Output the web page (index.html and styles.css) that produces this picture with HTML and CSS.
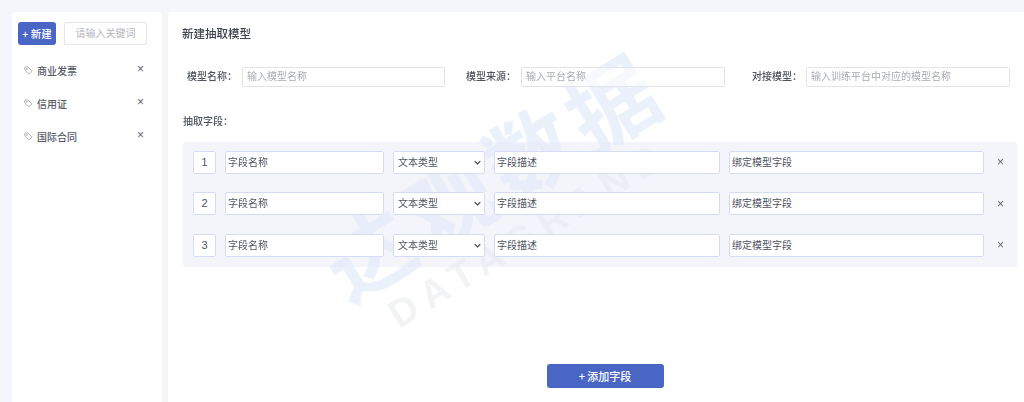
FILE: index.html
```html
<!DOCTYPE html>
<html lang="zh-CN">
<head>
<meta charset="utf-8">
<title>新建抽取模型</title>
<link rel="stylesheet" href="styles.css">
</head>
<body>
<div class="app">
  <aside class="sidebar">
    <div class="side-top">
      <button class="btn btn-new">+ 新建</button>
      <div class="search">请输入关键词</div>
    </div>
    <ul class="model-list">
      <li class="model-item">
        <svg class="tag" viewBox="0 0 12 12"><path d="M1 2v3.4l5.6 5.2 4-4.2L5 1.2H1.800A.8.800 0 0 0 1 2z"/><circle cx="3.600" cy="3.800" r=".8"/></svg>
        <span class="model-name">商业发票</span><span class="close">×</span>
      </li>
      <li class="model-item">
        <svg class="tag" viewBox="0 0 12 12"><path d="M1 2v3.4l5.6 5.2 4-4.2L5 1.2H1.800A.8.800 0 0 0 1 2z"/><circle cx="3.600" cy="3.800" r=".8"/></svg>
        <span class="model-name">信用证</span><span class="close">×</span>
      </li>
      <li class="model-item">
        <svg class="tag" viewBox="0 0 12 12"><path d="M1 2v3.4l5.6 5.2 4-4.200L5 1.200H1.800A.8.800 0 0 0 1 2z"/><circle cx="3.600" cy="3.800" r=".8"/></svg>
        <span class="model-name">国际合同</span><span class="close">×</span>
      </li>
    </ul>
  </aside>
  <main class="main">
    <div class="watermark" aria-hidden="true">
      <div class="wm-cn">达观数据</div>
      <div class="wm-en">DATAGRAND</div>
    </div>
    <h1 class="title">新建抽取模型</h1>
    <div class="form-row">
      <label class="label l1">模型名称：</label><div class="input i1">输入模型名称</div>
      <label class="label l2">模型来源：</label><div class="input i2">输入平台名称</div>
      <label class="label l3">对接模型：</label><div class="input i3">输入训练平台中对应的模型名称</div>
    </div>
    <div class="section-label">抽取字段：</div>
    <div class="fields">
      <div class="field-row">
        <div class="cell num">1</div><div class="cell">字段名称</div>
        <div class="cell type">文本类型<svg class="chev" viewBox="0 0 10 6"><path d="M1 1l4 4 4-4"/></svg></div>
        <div class="cell">字段描述</div><div class="cell">绑定模型字段</div><span class="close row-close">×</span>
      </div>
      <div class="field-row">
        <div class="cell num">2</div><div class="cell">字段名称</div>
        <div class="cell type">文本类型<svg class="chev" viewBox="0 0 10 6"><path d="M1 1l4 4 4-4"/></svg></div>
        <div class="cell">字段描述</div><div class="cell">绑定模型字段</div><span class="close row-close">×</span>
      </div>
      <div class="field-row">
        <div class="cell num">3</div><div class="cell">字段名称</div>
        <div class="cell type">文本类型<svg class="chev" viewBox="0 0 10 6"><path d="M1 1l4 4 4-4"/></svg></div>
        <div class="cell">字段描述</div><div class="cell">绑定模型字段</div><span class="close row-close">×</span>
      </div>
    </div>
    <div class="actions"><button class="btn btn-add">+ 添加字段</button></div>
  </main>
</div>
</body>
</html>
```
FILE: styles.css
```css
* { box-sizing: border-box; }
html, body { margin: 0; height: 100%; overflow: hidden; }
body {
  background: #f5f6fb;
  font-family: "Noto Sans CJK SC", "Liberation Sans", sans-serif;
  color: #4a4f5c;
  font-size: 10px;
}
.app {
  display: flex;
  gap: 6px;
  height: 402px;
  padding: 12px 0 0 12px;
  filter: blur(0.55px);
}
.sidebar {
  width: 150px;
  background: #fff;
  border-radius: 4px 4px 0 0;
  padding: 10px 6px;
  flex: none;
}
.side-top { display: flex; gap: 8px; }
.btn {
  border: 0;
  background: #4a66c4;
  color: #fff;
  font: inherit;
  border-radius: 3px;
  padding: 0;
}
.btn-new { width: 38px; height: 23px; font-weight: 500; font-size: 10.500px; }
.search {
  width: 83px;
  height: 23px;
  line-height: 20px;
  text-align: center;
  border: 1px solid #e5e6ea;
  border-radius: 2px;
  color: #b4b6bc;
}
.model-list { list-style: none; margin: 9px 0 0; padding: 0 0 0 6px; }
.model-item {
  display: flex;
  align-items: center;
  height: 33px;
}
.tag { width: 9px; height: 9px; fill: none; stroke: #9a9ea8; stroke-width: 1; margin-right: 4px; }
.model-name { flex: 1; color: #555a66; font-weight: 500; }
.close {
  font-family: "Liberation Sans", sans-serif;
  color: #5f6470;
  font-size: 12px;
  line-height: 1;
}
.model-item .close { margin: -4px 12px 0 0; }
.main {
  flex: 1;
  background: #fff;
  border-radius: 4px 0 0 0;
  padding: 13px 7px 0 15px;
  position: relative;
  overflow: hidden;
}
.title {
  margin: 0 0 0 -1px;
  font-size: 11.500px;
  line-height: 16px;
  font-weight: 500;
  color: #40444f;
  position: relative;
}
.form-row {
  display: flex;
  align-items: center;
  margin-top: 26px;
  padding-left: 4px;
  position: relative;
}
.label { color: #4e535f; font-weight: 500; white-space: nowrap; width: 55px; padding-bottom: 3px; }
.l2 { margin-left: 21px; width: 55px; }
.l3 { margin-left: 27px; width: 54px; }
.input {
  height: 20px;
  line-height: 16px;
  padding-left: 4px;
  border: 1px solid #e2e4e8;
  border-radius: 2px;
  color: #a9acb3;
  background: rgba(255, 255, 255, 0.6);
}
.i1 { width: 203px; }
.i2 { width: 204px; }
.i3 { width: 204px; }
.section-label { margin-top: 26px; line-height: 16px; color: #4e535f; font-weight: 500; position: relative; }
.fields {
  margin-top: 13px;
  width: 834px;
  height: 125px;
  background: rgba(228, 232, 246, 0.42);
  border-radius: 3px;
  padding: 8px 0 0 10px;
  position: relative;
}
.field-row {
  display: grid;
  grid-template-columns: 23px 159px 92px 226px 255px 10px;
  column-gap: 9px;
  height: 24px;
  margin-bottom: 17.500px;
  align-items: center;
}
.cell {
  height: 23px;
  line-height: 20px;
  padding-left: 2px;
  background: #fff;
  border: 1px solid #d5dbf3;
  border-radius: 2px;
  color: #4e535f;
  position: relative;
}
.num { text-align: center; padding: 0; font-family: "Liberation Sans", sans-serif; font-size: 11px; }
.type { padding-left: 4px; }
.chev {
  position: absolute;
  right: 3px;
  top: 8px;
  width: 7px;
  height: 5px;
  fill: none;
  stroke: #3c404a;
  stroke-width: 1.600;
}
.row-close { margin-left: 4px; }
.actions { display: flex; justify-content: center; margin-top: 97px; position: relative; }
.btn-add { width: 117px; height: 24px; font-size: 11px; font-weight: 500; margin-left: 10px; }
.watermark {
  position: absolute;
  left: 109px;
  top: 106px;
  width: 450px;
  height: 146px;
  text-align: center;
  transform: rotate(-31.500deg);
  pointer-events: none;
}
.wm-cn {
  font-size: 88px;
  font-weight: 700;
  line-height: 102px;
  letter-spacing: 7px;
  color: #ebf1fb;
  white-space: nowrap;
}
.wm-en {
  font-family: "Liberation Sans", sans-serif;
  font-size: 38px;
  font-weight: 700;
  line-height: 44px;
  letter-spacing: 9px;
  color: #f2f3f5;
  white-space: nowrap;
}
```
